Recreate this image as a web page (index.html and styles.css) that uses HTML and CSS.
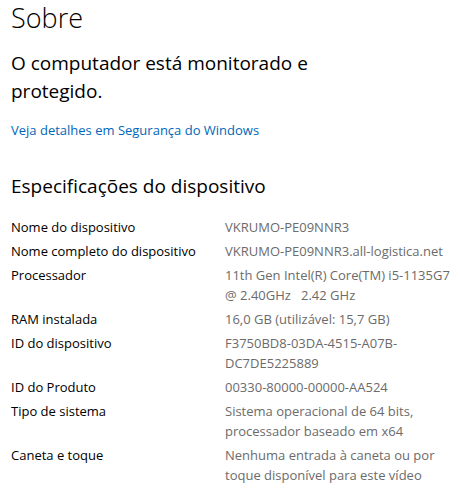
FILE: index.html
```html
<!DOCTYPE html>
<html lang="pt-BR">
<head>
    <meta charset="UTF-8">
    <title>Sobre</title>
    <link rel="stylesheet" href="styles.css">
</head>
<body>
    <div class="about-page">
        <h1>Sobre</h1>
        <p class="status">O computador está monitorado e protegido.</p>
        <a class="details-link" href="#">Veja detalhes em Segurança do Windows</a>

        <h2>Especificações do dispositivo</h2>
        <div class="spec-list">
            <div class="spec-name">Nome do dispositivo</div>
            <div class="spec-value">VKRUMO-PE09NNR3</div>

            <div class="spec-name">Nome completo do dispositivo</div>
            <div class="spec-value">VKRUMO-PE09NNR3.all-logistica.net</div>

            <div class="spec-name">Processador</div>
            <div class="spec-value">11th Gen Intel(R) Core(TM) i5-1135G7 @ 2.40GHz&nbsp;&nbsp; 2.42 GHz</div>

            <div class="spec-name">RAM instalada</div>
            <div class="spec-value">16,0 GB (utilizável: 15,7 GB)</div>

            <div class="spec-name">ID do dispositivo</div>
            <div class="spec-value">F3750BD8-03DA-4515-A07B-DC7DE5225889</div>

            <div class="spec-name">ID do Produto</div>
            <div class="spec-value">00330-80000-00000-AA524</div>

            <div class="spec-name">Tipo de sistema</div>
            <div class="spec-value">Sistema operacional de 64 bits, processador baseado em x64</div>

            <div class="spec-name">Caneta e toque</div>
            <div class="spec-value">Nenhuma entrada à caneta ou por toque disponível para este vídeo</div>
        </div>
        <!-- botao Copiar (so a borda de cima aparece) -->
        <button class="copy-button" aria-label="Copiar"></button>
    </div>
</body>
</html>
```

FILE: styles.css
```css
/* Pagina de configuracoes - Sobre */
body {
    margin: 0;
    background: #fff;
    font-family: "Open Sans", "Noto Sans", sans-serif;
    color: #000;
}

.about-page {
    padding: 0 11px;
}

h1 {
    margin: 0;
    font-size: 27px;
    font-weight: 300;
    line-height: 36px;
}

.status {
    margin: 13px 0 0;
    width: 320px;
    font-size: 19px;
    line-height: 28px;
}

.details-link {
    display: block;
    margin-top: 15px;
    font-size: 13px;
    line-height: 20px;
    color: #0067b8;
    text-decoration: none;
}

h2 {
    margin: 32px 0 0;
    font-size: 19px;
    font-weight: 400;
    line-height: 28px;
}

/* Lista de especificacoes */
.spec-list {
    display: grid;
    grid-template-columns: 214px 1fr;
    row-gap: 4px;
    margin-top: 17px;
    font-size: 13px;
    line-height: 20px;
}

.spec-value {
    color: #6b6b6b;
}

.copy-button {
    display: block;
    margin-top: 15px;
    width: 89px;
    height: 32px;
    border: none;
    background: #ccc;
}
```
